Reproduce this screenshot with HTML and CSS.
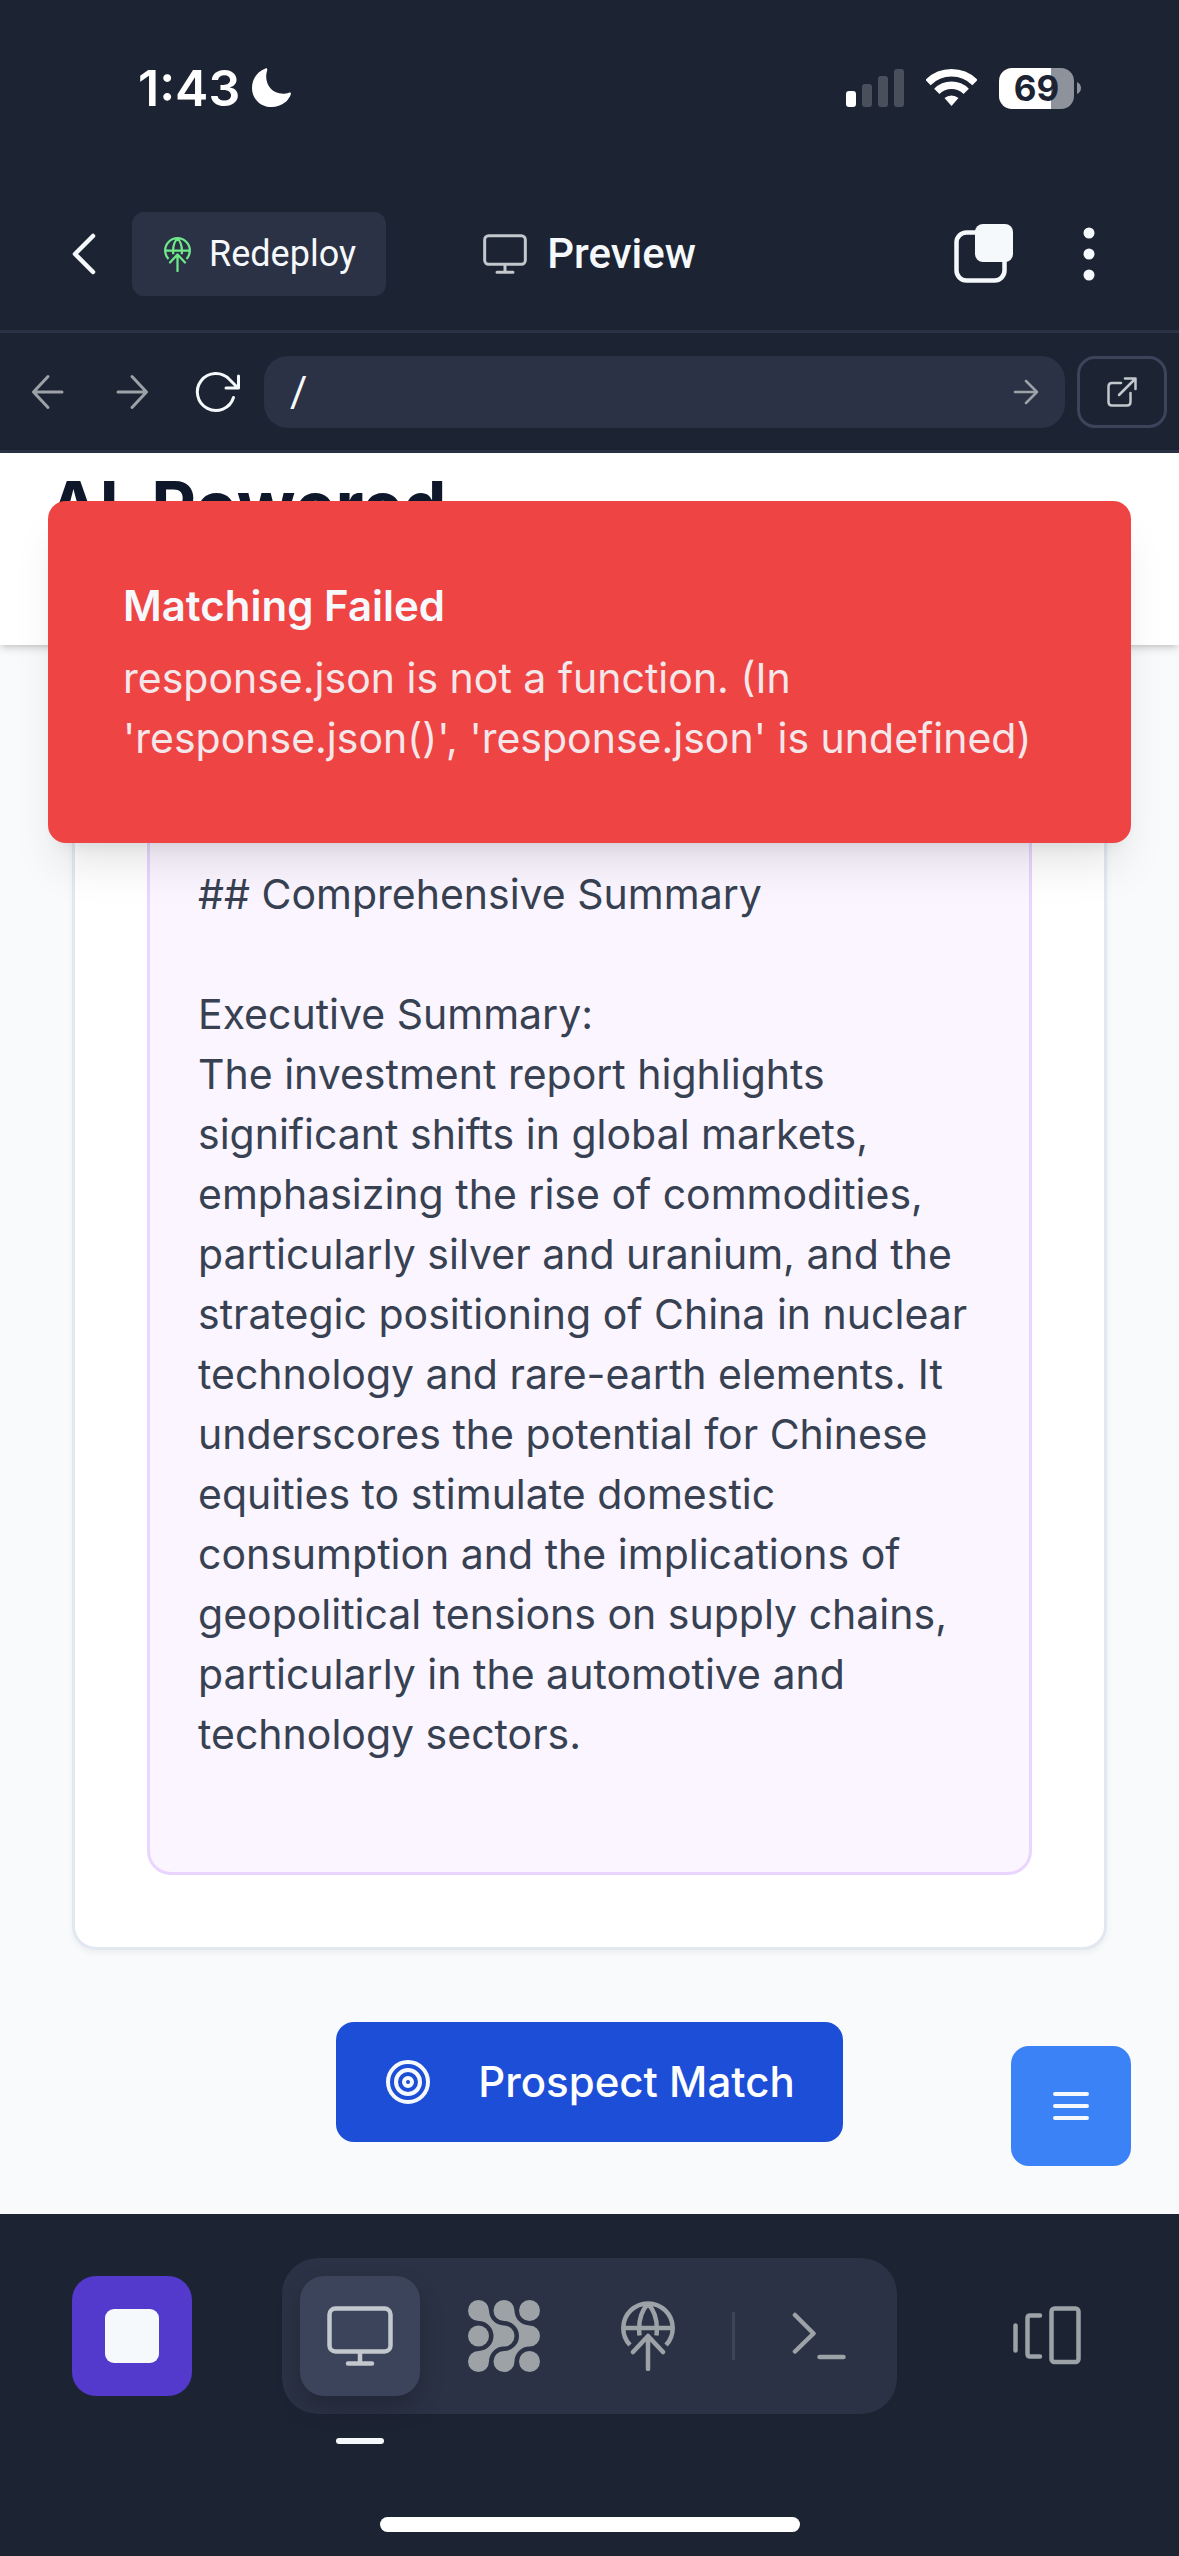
FILE: index.html
```html
<!DOCTYPE html>
<html lang="en">
<head>
<meta charset="utf-8">
<meta name="viewport" content="width=device-width, initial-scale=1">
<title>Preview</title>
<link rel="stylesheet" href="styles.css">
</head>
<body>
<svg class="sprite" aria-hidden="true">
  <symbol id="monitor" viewBox="0 0 66 60">
    <rect x="2.5" y="2.5" width="61" height="43" rx="6"/>
    <path d="M33 46v11.5M21 57.5h24"/>
  </symbol>
  <symbol id="deploy" viewBox="0 0 54 70">
    <path d="M9 44A24.7 24.7 0 1 1 45 44M3 27h48M27 3C21 9 17 20 18.500 34.500M27 3c6 6 10 17 8.500 31.500" stroke-linecap="butt"/>
    <path d="M27 36v32M12 51l15-16 15 16"/>
  </symbol>
</svg>

<div class="status">
  <div class="status-side">
    <span class="time">1:43</span>
    <svg width="40" height="40" viewBox="0 0 40 40" fill="#fff" aria-hidden="true"><path d="M13.500.500C15 0 15.700 1 15 3 11.500 14.500 19.500 27.500 34 25.500c2-.300 4.200-1.500 4.800-.600.700 1.200-2.100 6.500-5.300 9.100C20 45 0 37 0 20 0 10.500 5.500 3.500 13.500.500z"/></svg>
  </div>
  <div class="status-side status-right">
    <svg width="58" height="38" viewBox="0 0 58 38" fill="#fff" aria-hidden="true"><rect y="22" width="10" height="16" rx="3"/><g opacity=".2"><rect x="16" y="15" width="10" height="23" rx="3"/><rect x="32" y="7" width="10" height="31" rx="3"/><rect x="48" width="10" height="38" rx="3"/></g></svg>
    <svg width="51" height="38" viewBox="0 0 51 38" fill="none" stroke="#fff" stroke-width="7.500" aria-hidden="true"><path d="M2 13.500a33.200 33.200 0 0 1 47 0M10.800 22.300a20.800 20.800 0 0 1 29.400 0"/><path d="M25.500 37l-7-8a11 11 0 0 1 14 0z" fill="#fff" stroke="none"/></svg>
    <div class="battery"><span class="charge">69</span><svg width="4" height="12" viewBox="0 0 4 12" fill="#8e929b" aria-hidden="true"><path d="M0 0q4 2 4 6t-4 6z"/></svg></div>
  </div>
</div>

<header class="topbar">
  <div class="topbar-left">
    <button class="plain back" aria-label="Back"><svg width="28" height="44" viewBox="0 0 28 44" stroke-width="4.500"><path d="M23 4L5 22l18 18"/></svg></button>
    <button class="redeploy"><svg class="green" width="27" height="35" stroke-width="4.500"><use href="#deploy"/></svg>Redeploy</button>
  </div>
  <div class="topbar-title"><svg class="light" width="44" height="40" stroke-width="4.500" aria-hidden="true"><use href="#monitor"/></svg>Preview</div>
  <div class="topbar-right">
    <button class="plain" aria-label="Tabs"><svg width="60" height="60" viewBox="0 0 60 60" stroke-width="4.500"><rect x="2.500" y="8.500" width="48" height="48" rx="10"/><rect x="21" y="0" width="38" height="38" rx="8" fill="#f5f9fc" stroke="none"/></svg></button>
    <button class="plain" aria-label="More"><svg width="12" height="54" viewBox="0 0 12 54" fill="#f5f9fc"><circle cx="6" cy="6" r="5.500"/><circle cx="6" cy="27" r="5.500"/><circle cx="6" cy="48" r="5.500"/></svg></button>
  </div>
</header>

<nav class="urlbar">
  <button class="plain tool" aria-label="Go back"><svg class="dim" width="72" height="72" viewBox="0 0 72 72" stroke-width="3"><path d="M50 36H21.500M36 20.500L21.500 36 36 51.500"/></svg></button>
  <button class="plain tool" aria-label="Go forward"><svg class="dim" width="72" height="72" viewBox="0 0 72 72" stroke-width="3"><path d="M22 36h28.500M36 20.500L50.500 36 36 51.500"/></svg></button>
  <button class="plain tool" aria-label="Reload"><svg width="72" height="72" viewBox="0 0 72 72" stroke-width="3"><path d="M53.500 41.500A18.500 18.500 0 1 1 49.500 23.500L58 32M58.500 20v12H46"/></svg></button>
  <form class="address">
    <input type="text" value="/" aria-label="Path">
    <button class="plain" type="button" aria-label="Go"><svg class="dim" width="26" height="26" viewBox="0 0 26 26" stroke-width="2.500"><path d="M2 13h22M13 2l11 11-11 11"/></svg></button>
  </form>
  <button class="external" aria-label="Open in new tab"><svg class="light" width="32" height="32" viewBox="0 0 32 32" stroke-width="2.500"><path d="M15 7H6Q2.500 7 2.500 10.500V26Q2.500 29.500 6 29.500H21Q24.500 29.500 24.500 26V17M13 19L29.500 2.500M19 2.500h10.500V13"/></svg></button>
</nav>

<div class="pane">
  <div class="site-header"><h1>AI-Powered</h1></div>
  <main class="content">
    <section class="card">
      <div class="summary">## Comprehensive Summary

Executive Summary:
The investment report highlights significant shifts in global markets, emphasizing the rise of commodities, particularly silver and uranium, and the strategic positioning of China in nuclear technology and rare-earth elements. It underscores the potential for Chinese equities to stimulate domestic consumption and the implications of geopolitical tensions on supply chains, particularly in the automotive and technology sectors.
<br></div>
    </section>
    <button class="match"><svg width="48" height="48" viewBox="0 0 48 48" stroke-width="4"><circle cx="24" cy="24" r="20"/><circle cx="24" cy="24" r="12"/><circle cx="24" cy="24" r="4"/></svg>Prospect Match</button>
  </main>
  <button class="menu" aria-label="Menu"><svg width="48" height="48" viewBox="0 0 48 48" stroke-width="4"><path d="M8 12h32M8 24h32M8 36h32"/></svg></button>
  <div class="toast" role="alert">
    <strong>Matching Failed</strong>
    <p>response.json is not a function. (In 'response.json()', 'response.json' is undefined)</p>
  </div>
</div>

<footer class="dock">
  <div class="dock-row">
    <button class="tile stop" aria-label="Stop"><svg width="54" height="54" viewBox="0 0 54 54" fill="#f5f9fc"><rect width="54" height="54" rx="9"/></svg></button>
    <div class="tabs">
      <button class="tile active" aria-label="Preview"><svg class="light" width="66" height="60" stroke-width="4.500"><use href="#monitor"/></svg></button>
      <button class="tile" aria-label="Agent"><svg width="72" height="72" viewBox="0 0 72 72" fill="#9ca2a6"><circle cx="61.500" cy="10.500" r="10.500"/><circle cx="10.500" cy="36" r="10.500"/><circle cx="61.500" cy="61.500" r="10.500"/><path d="M10.500 0A10.500 10.500 0 0 1 21 10.500 15 15 0 0 0 36 25.500 10.500 10.500 0 0 1 36 46.500 15 15 0 0 0 21 61.500 10.500 10.500 0 1 1 10.500 51 15 15 0 0 0 10.500 21 10.500 10.500 0 1 1 10.500 0z"/><path d="M36 0A10.500 10.500 0 0 1 46.500 10.500 15 15 0 0 0 61.500 25.500 10.500 10.500 0 0 1 61.500 46.500 15 15 0 0 0 46.500 61.500 10.500 10.500 0 1 1 36 51 15 15 0 0 0 36 21 10.500 10.500 0 1 1 36 0z"/></svg></button>
      <button class="tile" aria-label="Deployments"><svg class="dim" width="54" height="70" stroke-width="4.500"><use href="#deploy"/></svg></button>
      <span class="rule"></span>
      <button class="tile" aria-label="Shell"><svg class="dim" width="54" height="48" viewBox="0 0 54 48" stroke-width="4.500"><path d="M3 3l18.500 18.500L3 39.500M27.500 45h24"/></svg></button>
    </div>
    <button class="tile" aria-label="Switch pane"><svg class="dim" width="68" height="60" viewBox="0 0 68 60" stroke-width="4.500"><path d="M2.500 19.500v25M27 9.500H17Q14.500 9.500 14.500 12V48Q14.500 50.500 17 50.500H27"/><rect x="38.500" y="2.500" width="27" height="53.500" rx="3"/></svg></button>
  </div>
  <div class="home"></div>
</footer>
</body>
</html>
```

FILE: styles.css
```css
* {
  box-sizing: border-box;
}

body {
  margin: 0;
  min-height: 100vh;
  display: flex;
  flex-direction: column;
  background: #1c2333;
  color: #f5f9fc;
  font-family: Inter, "Liberation Sans", sans-serif;
  font-size: 42px;
  line-height: 60px;
}

svg {
  display: block;
  flex: none;
}

/* Outline icons; filled ones carry their own fill */
svg:where(:not([fill])) {
  fill: none;
  stroke: #f5f9fc;
  stroke-linecap: round;
  stroke-linejoin: round;
}

button {
  margin: 0;
  padding: 0;
  border: 0;
  background: none;
  color: inherit;
  font: inherit;
  display: flex;
  align-items: center;
  justify-content: center;
}

.sprite {
  position: absolute;
  width: 0;
  height: 0;
}

.dim {
  stroke: #9ca2a6;
}

.light {
  stroke: #c2c8cc;
}

.green {
  stroke: #6fe88a;
}

/* Status bar */
.status {
  display: flex;
  justify-content: space-between;
  align-items: center;
  padding: 58px 98px 58px 138px;
}

.status-side {
  display: flex;
  align-items: center;
  gap: 12px;
  color: #fff;
}

.status-right {
  gap: 22px;
}

.time {
  font-size: 50px;
  font-weight: 600;
}

.battery {
  display: flex;
  align-items: center;
  gap: 3px;
}

.charge {
  width: 75px;
  border-radius: 13px;
  background: linear-gradient(to right, #fff 70%, #8e929b 70%);
  color: #1c2333;
  font-size: 35px;
  font-weight: 700;
  line-height: 41px;
  text-align: center;
}

/* App bar */
.topbar {
  display: grid;
  grid-template-columns: 1fr auto 1fr;
  align-items: center;
  padding: 36px 70px 34px;
  border-bottom: 3px solid #2b3245;
  font-family: Roboto, "Liberation Sans", sans-serif;
}

.topbar-left,
.topbar-right,
.topbar-title {
  display: flex;
  align-items: center;
}

.topbar-left {
  gap: 34px;
}

.topbar-right {
  justify-content: flex-end;
  gap: 69px;
  padding-right: 14px;
}

.topbar-title {
  gap: 20px;
  font-weight: 500;
}

.redeploy {
  height: 84px;
  padding: 0 30px 0 32px;
  gap: 18px;
  border-radius: 12px;
  background: #2b3245;
  font-size: 36px;
}

/* Address bar */
.urlbar {
  display: flex;
  gap: 12px;
  padding: 23px 12px 22px;
  border-bottom: 3px solid #2b3245;
}

.tool {
  width: 72px;
}

.address {
  flex: 1;
  min-width: 0;
  display: flex;
  align-items: center;
  height: 72px;
  padding: 0 26px;
  border-radius: 24px;
  background: #2b3245;
}

.address input {
  flex: 1;
  min-width: 0;
  padding: 0;
  border: 0;
  outline: 0;
  background: none;
  color: inherit;
  font: 42px/60px Roboto, "Liberation Sans", sans-serif;
}

.external {
  width: 90px;
  border: 3px solid #3c445c;
  border-radius: 18px;
}

/* Previewed page */
.pane {
  position: relative;
  flex: 1;
  background: #f8fafc;
}

.site-header {
  position: relative;
  height: 192px;
  padding: 12px 48px;
  background: #fff;
  box-shadow: 0 3px 9px rgba(0, 0, 0, 0.15), 0 3px 6px -3px rgba(0, 0, 0, 0.15);
}

.site-header h1 {
  margin: 0;
  color: #0f172a;
  font-size: 69px;
  font-weight: 700;
  line-height: 82px;
}

.content {
  display: flex;
  flex-direction: column;
  align-items: center;
  gap: 72px;
  padding: 93px 72px 72px;
}

.card {
  width: 100%;
  padding: 72px;
  border: 3px solid #e2e8f0;
  border-radius: 24px;
  background: #fff;
  box-shadow: 0 3px 6px rgba(0, 0, 0, 0.05);
}

.summary {
  padding: 48px;
  border: 3px solid #e9d5ff;
  border-radius: 24px;
  background: #faf5ff;
  color: #374151;
  font-size: 41px;
  white-space: pre-wrap;
}

.match {
  height: 120px;
  padding: 0 48px;
  gap: 46px;
  border-radius: 18px;
  background: #1d4ed8;
  color: #fff;
  font-weight: 500;
}

.menu {
  position: absolute;
  right: 48px;
  bottom: 48px;
  width: 120px;
  height: 120px;
  border-radius: 18px;
  background: #3b82f6;
}

.toast {
  position: absolute;
  top: 48px;
  left: 48px;
  right: 48px;
  display: flex;
  flex-direction: column;
  gap: 12px;
  padding: 75px;
  border-radius: 18px;
  background: #ef4444;
  box-shadow: 0 30px 45px -9px rgba(0, 0, 0, 0.1), 0 12px 18px -12px rgba(0, 0, 0, 0.1);
}

.toast strong {
  font-weight: 600;
}

.toast p {
  margin: 0;
  font-size: 41px;
  opacity: 0.9;
}

/* Dock */
.dock {
  padding: 44px 72px 24px;
}

.dock-row {
  display: flex;
  justify-content: space-between;
  align-items: center;
}

.tile {
  position: relative;
  width: 120px;
  height: 120px;
  border-radius: 24px;
}

.stop {
  background: #5339cc;
}

.tabs {
  display: flex;
  align-items: center;
  gap: 24px;
  padding: 18px;
  border-radius: 36px;
  background: #2b3245;
}

.active {
  background: #3c445c;
  box-shadow: 0 12px 24px rgba(2, 2, 3, 0.2);
}

.active::after {
  content: "";
  position: absolute;
  top: 162px;
  left: 36px;
  width: 48px;
  height: 6px;
  border-radius: 3px;
  background: #f5f9fc;
}

.rule {
  width: 3px;
  height: 48px;
  background: #3c445c;
}

.home {
  width: 420px;
  max-width: 100%;
  height: 15px;
  margin: 103px auto 0;
  border-radius: 8px;
  background: #fff;
}
```
